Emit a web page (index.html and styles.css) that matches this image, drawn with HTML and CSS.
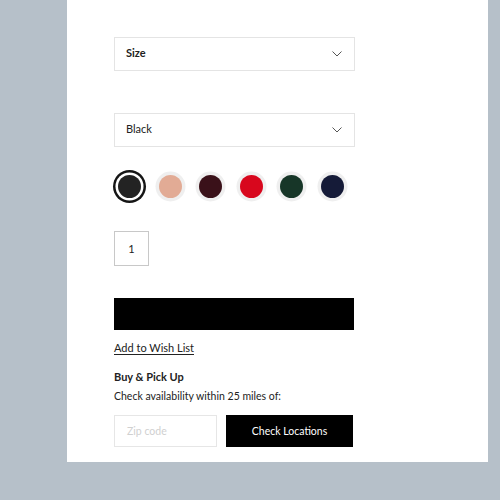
FILE: index.html
```html
<!DOCTYPE html>
<html>
<head>
<meta charset="utf-8">
<link rel="stylesheet" href="styles.css">
</head>
<body>
<div class="panel">
  <div class="select size-select">
    <span class="select-label bold">Size</span>
    <svg class="chev" width="10" height="6" viewBox="0 0 10 6"><path d="M0.5 0.5 L5 5 L9.5 0.5" fill="none" stroke="#555" stroke-width="1"/></svg>
  </div>
  <div class="select color-select">
    <span class="select-label">Black</span>
    <svg class="chev" width="10" height="6" viewBox="0 0 10 6"><path d="M0.5 0.5 L5 5 L9.5 0.5" fill="none" stroke="#555" stroke-width="1"/></svg>
  </div>
  <div class="swatches">
    <span class="swatch selected" style="background:#232323"></span>
    <span class="swatch" style="background:#e2ab95"></span>
    <span class="swatch" style="background:#3a1119"></span>
    <span class="swatch" style="background:#d8071d"></span>
    <span class="swatch" style="background:#173628"></span>
    <span class="swatch" style="background:#151b38"></span>
  </div>
  <div class="qty">1</div>
  <div class="bar"></div>
  <a class="wish">Add to Wish List</a>
  <div class="pick-title">Buy &amp; Pick Up</div>
  <div class="pick-sub">Check availability within 25 miles of:</div>
  <div class="zip-row">
    <div class="zip">Zip code</div>
    <div class="check">Check Locations</div>
  </div>
</div>
</body>
</html>
```
FILE: styles.css
```css
html, body {
  margin: 0;
  padding: 0;
}
body {
  background: #b6c0c9;
  width: 500px;
  height: 500px;
  font-family: Lato, "Open Sans", sans-serif;
  color: #222;
}
.panel {
  margin-left: 67px;
  width: 421px;
  height: 462px;
  background: #fff;
  box-sizing: border-box;
  padding: 37px 0 0 47px;
  display: flex;
  flex-direction: column;
  align-items: flex-start;
}
.select {
  width: 241px;
  height: 34px;
  box-sizing: border-box;
  border: 1px solid #e4e4e4;
  display: flex;
  align-items: center;
  justify-content: space-between;
  padding: 0 12px 0 11px;
  font-size: 11px;
}
.select-label { margin-top: -3px; }
.bold { font-weight: 700; }
.chev { display: block; margin-top: -1px; }
.color-select { margin-top: 42px; }
.swatches {
  margin-top: 28px;
  margin-left: 4px;
  display: flex;
  gap: 17.6px;
}
.swatch {
  width: 23px;
  height: 23px;
  border-radius: 50%;
  box-shadow: 0 0 0 3.5px #efefef;
}
.swatch.selected {
  box-shadow: 0 0 0 2.5px #fff, 0 0 0 5px #151515;
}
.qty {
  margin-top: 33px;
  width: 35px;
  height: 35px;
  box-sizing: border-box;
  border: 1px solid #c8c8c8;
  display: flex;
  align-items: center;
  justify-content: center;
  font-size: 11px;
}
.bar {
  margin-top: 32px;
  width: 240px;
  height: 32px;
  background: #000;
}
.wish {
  margin-top: 11px;
  font-size: 11px;
  line-height: 14px;
  color: #222;
  text-decoration: underline;
  text-underline-offset: 2px;
}
.pick-title {
  margin-top: 15px;
  font-size: 11px;
  font-weight: 700;
  line-height: 14px;
}
.pick-sub {
  margin-top: 5px;
  font-size: 10.5px;
  line-height: 14px;
}
.zip-row {
  margin-top: 12px;
  display: flex;
  gap: 9px;
}
.zip {
  width: 103px;
  height: 32px;
  box-sizing: border-box;
  border: 1px solid #e6e6e6;
  display: flex;
  align-items: center;
  padding-left: 12px;
  font-size: 10.5px;
  color: #d0d0d0;
}
.check {
  width: 127px;
  height: 32px;
  background: #000;
  color: #fff;
  display: flex;
  align-items: center;
  justify-content: center;
  font-size: 10.5px;
}
```
